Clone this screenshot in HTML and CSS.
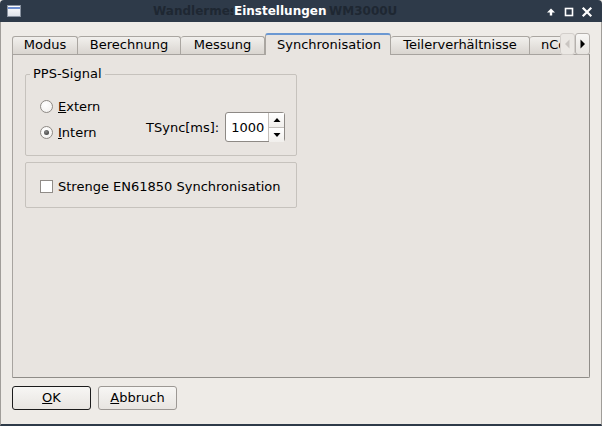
FILE: index.html
```html
<!DOCTYPE html>
<html lang="de">
<head>
<meta charset="utf-8">
<title>Einstellungen</title>
<link rel="stylesheet" href="styles.css">
</head>
<body>
<div class="window">
  <div class="titlebar">
    <div class="winicon"><div class="winicon-bar"></div></div>
    <div class="ghost"><span>Wandlermesseinrichtung</span><span class="ghost-model">WM3000U</span></div>
    <div class="title">Einstellungen</div>
    <div class="wbtns">
      <span class="wbtn"><svg width="18" height="22" viewBox="0 0 18 22"><path d="M9 8.5 L13 12.5 L10.2 12.5 L10.2 15.5 L7.8 15.5 L7.8 12.5 L5 12.5 Z" fill="#ffffff"/></svg></span>
      <span class="wbtn"><svg width="18" height="22" viewBox="0 0 18 22"><rect x="5.5" y="8.5" width="7" height="7" fill="none" stroke="#ffffff" stroke-width="1.6"/></svg></span>
      <span class="wbtn"><svg width="18" height="22" viewBox="0 0 18 22"><path d="M5.5 8.5 L12.5 15.5 M12.5 8.5 L5.5 15.5" stroke="#ffffff" stroke-width="2.2" stroke-linecap="square"/></svg></span>
    </div>
  </div>
  <div class="client">
    <div class="tabwidget">
      <div class="tabbar">
        <div class="tabs">
          <div class="tab w-modus">Modus</div>
          <div class="tab w-ber">Berechnung</div>
          <div class="tab w-mess">Messung</div>
          <div class="tab tab-active w-sync">Synchronisation</div>
          <div class="tab w-teil">Teilerverhältnisse</div>
          <div class="tab w-nc">nConvent</div>
        </div>
        <div class="scroller">
          <div class="sbtn sbtn-off"><svg width="13" height="20" viewBox="0 0 13 20"><path d="M8.5 5.5 L8.5 14.5 L4 10 Z" fill="#c9c5c1"/></svg></div>
          <div class="sbtn"><svg width="13" height="20" viewBox="0 0 13 20"><path d="M4.5 5.5 L4.5 14.5 L9 10 Z" fill="#000000"/></svg></div>
        </div>
      </div>
      <div class="pane">
        <fieldset class="group group-pps">
          <legend class="group-title">PPS-Signal</legend>
          <div class="group-body pps-body">
            <div class="radios">
              <div class="opt"><span class="radio"></span><span><u>E</u>xtern</span></div>
              <div class="opt"><span class="radio radio-on"></span><span><u>I</u>ntern</span></div>
            </div>
            <div class="tsync">
              <span class="tsync-label">TSync[ms]:</span>
              <div class="spin">
                <span class="spin-value">1000</span>
                <div class="spin-btns">
                  <div class="spin-btn"><svg width="14" height="14" viewBox="0 0 14 14"><path d="M3.5 9 L10.5 9 L7 5 Z" fill="#000"/></svg></div>
                  <div class="spin-btn spin-btn-down"><svg width="14" height="14" viewBox="0 0 14 14"><path d="M3.5 5 L10.5 5 L7 9 Z" fill="#000"/></svg></div>
                </div>
              </div>
            </div>
          </div>
        </fieldset>
        <div class="group group-strict">
          <div class="opt"><span class="check"></span><span>Strenge EN61850 Synchronisation</span></div>
        </div>
      </div>
    </div>
    <div class="buttons">
      <div class="btn btn-default"><u>O</u>K</div>
      <div class="btn"><u>A</u>bbruch</div>
    </div>
  </div>
</div>
</body>
</html>
```

FILE: styles.css
```css
html, body {
  margin: 0;
  padding: 0;
  background: #eeebe7;
}
body {
  font-family: "DejaVu Sans", "Liberation Sans", sans-serif;
  font-size: 13px;
  color: #000;
}
.window {
  width: 602px;
  height: 426px;
  display: flex;
  flex-direction: column;
  overflow: hidden;
}
.titlebar {
  position: relative;
  height: 22px;
  flex: 0 0 22px;
  background: #2e3a49;
  border-radius: 4px 4px 0 0;
  display: flex;
  align-items: center;
  font-weight: bold;
  font-size: 12px;
}
.winicon {
  margin-left: 7px;
  width: 12px;
  height: 10px;
  border: 1px solid #8a93a0;
  background: linear-gradient(#ffffff, #dfe3ea);
  position: relative;
}
.winicon-bar {
  height: 2px;
  background: #6f8fd0;
  margin-top: 1px;
}
.ghost {
  position: absolute;
  left: 153px;
  top: 0;
  height: 22px;
  line-height: 22px;
  color: #1e2732;
  white-space: nowrap;
  display: flex;
}
.ghost-model {
  position: absolute;
  left: 176px;
}
.title {
  position: absolute;
  left: 233px;
  top: 0;
  line-height: 22px;
  padding: 0 1px;
  color: #ffffff;
  background: #2e3a49;
}
.wbtns {
  margin-left: auto;
  margin-right: 6px;
  display: flex;
}
.wbtn {
  width: 18px;
  height: 22px;
  display: block;
}
.wbtn svg { display: block; }

.client {
  flex: 1;
  display: flex;
  flex-direction: column;
  background: #eeebe7;
  border-left: 1px solid #a09d99;
  border-right: 1px solid #a09d99;
  border-bottom: 2px solid #2e3a49;
  padding: 11px 11px 14px 11px;
  min-height: 0;
}
.tabwidget {
  flex: 1;
  display: flex;
  flex-direction: column;
  min-height: 0;
}
.tabbar {
  height: 22px;
  flex: 0 0 22px;
  display: flex;
  position: relative;
  z-index: 1;
  margin-bottom: -1px;
}
.tabs {
  flex: 1;
  display: flex;
  align-items: flex-end;
  overflow: hidden;
  min-width: 0;
}
.tab {
  flex: 0 0 auto;
  box-sizing: border-box;
  height: 18px;
  margin-bottom: 1px;
  line-height: 16px;
  text-align: center;
  white-space: nowrap;
  border: 1px solid #aaa6a1;
  border-bottom: none;
  border-left: none;
  border-radius: 3px 3px 0 0;
  background: linear-gradient(#f2f0ed, #d9d5d0);
  overflow: hidden;
}
.w-modus { width: 66px; border-left: 1px solid #aaa6a1; }
.w-ber { width: 103px; }
.w-mess { width: 84px; }
.w-sync { width: 126px; }
.w-teil { width: 139px; }
.w-nc { width: 60px; text-align: left; padding-left: 11px; border-left: none; }
.tab-active {
  height: 22px;
  margin-bottom: 0;
  line-height: 19px;
  border-left: 1px solid #aaa6a1;
  border-top: 2px solid #6b98d2;
  background: #e8e4e0;
  border-radius: 3px 3px 0 0;
  padding-left: 2px;
}
.tab-active + .tab { border-left: none; }
.scroller {
  flex: 0 0 auto;
  display: flex;
  height: 22px;
}
.sbtn {
  box-sizing: border-box;
  width: 15px;
  height: 22px;
  border: 1px solid #b5b1ad;
  border-radius: 3px;
  background: linear-gradient(#f8f7f5, #e6e3df);
  display: flex;
  align-items: center;
  justify-content: center;
}
.sbtn-off {
  border-color: #d3cfcb;
  background: #ebe8e4;
}
.sbtn svg { display: block; }

.pane {
  flex: 1;
  background: #e8e4e0;
  border: 1px solid #a7a39f;
  border-right-color: #8f8c88;
  border-bottom-color: #8f8c88;
  border-radius: 0 0 2px 0;
  padding: 11px 12px 0 12px;
  min-height: 0;
}
.group {
  box-sizing: border-box;
  width: 272px;
  border: 1px solid #c6c2bd;
  border-radius: 2px;
  margin: 0;
  min-width: 0;
}
.group-pps {
  padding: 0;
}
.group-title {
  padding: 0 3px;
  margin-left: 4px;
  line-height: 16px;
  height: 16px;
}
.group-body {
  padding: 14px 8px 13px 14px;
}
.pps-body {
  display: flex;
  align-items: flex-end;
}
.radios {
  display: flex;
  flex-direction: column;
  gap: 6px;
  width: 106px;
  flex: 0 0 106px;
}
.opt {
  height: 20px;
  display: flex;
  align-items: center;
  gap: 5px;
  white-space: nowrap;
}
.radio {
  box-sizing: border-box;
  width: 13px;
  height: 13px;
  border-radius: 50%;
  border: 1px solid #8e8a86;
  background: radial-gradient(circle at 40% 35%, #ffffff, #f0eeec);
  display: flex;
  align-items: center;
  justify-content: center;
}
.radio-on::after {
  content: "";
  width: 5px;
  height: 5px;
  border-radius: 50%;
  background: radial-gradient(circle at 40% 35%, #8a8a8a, #2e2e2e);
}
.tsync {
  flex: 0 0 auto;
  display: flex;
  align-items: center;
  gap: 6px;
  height: 30px;
}
.spin {
  box-sizing: border-box;
  width: 60px;
  height: 30px;
  border: 1px solid #8d8985;
  border-radius: 3px;
  background: #ffffff;
  display: flex;
  align-items: center;
}
.spin-value {
  flex: 1;
  padding-left: 5px;
}
.spin-btns {
  align-self: stretch;
  width: 15px;
  border-left: 1px solid #c3bfbb;
  display: flex;
  flex-direction: column;
}
.spin-btn {
  flex: 1;
  display: flex;
  align-items: center;
  justify-content: center;
  background: linear-gradient(#ffffff, #f1efec);
}
.spin-btn-down {
  border-top: 1px solid #c3bfbb;
}
.spin-btn svg { display: block; }
.group-strict {
  margin-top: 6px;
  height: 46px;
  padding: 13px 14px 0 14px;
}
.check {
  box-sizing: border-box;
  width: 13px;
  height: 13px;
  border: 1px solid #908c88;
  background: #ffffff;
}
.buttons {
  flex: 0 0 auto;
  display: flex;
  gap: 7px;
  margin-top: 8px;
}
.btn {
  box-sizing: border-box;
  width: 79px;
  height: 24px;
  line-height: 22px;
  text-align: center;
  border: 1px solid #9c9894;
  border-radius: 3px;
  background: linear-gradient(#f7f6f4, #e8e5e1);
}
.btn-default {
  border-color: #1c1c1c;
}
```
